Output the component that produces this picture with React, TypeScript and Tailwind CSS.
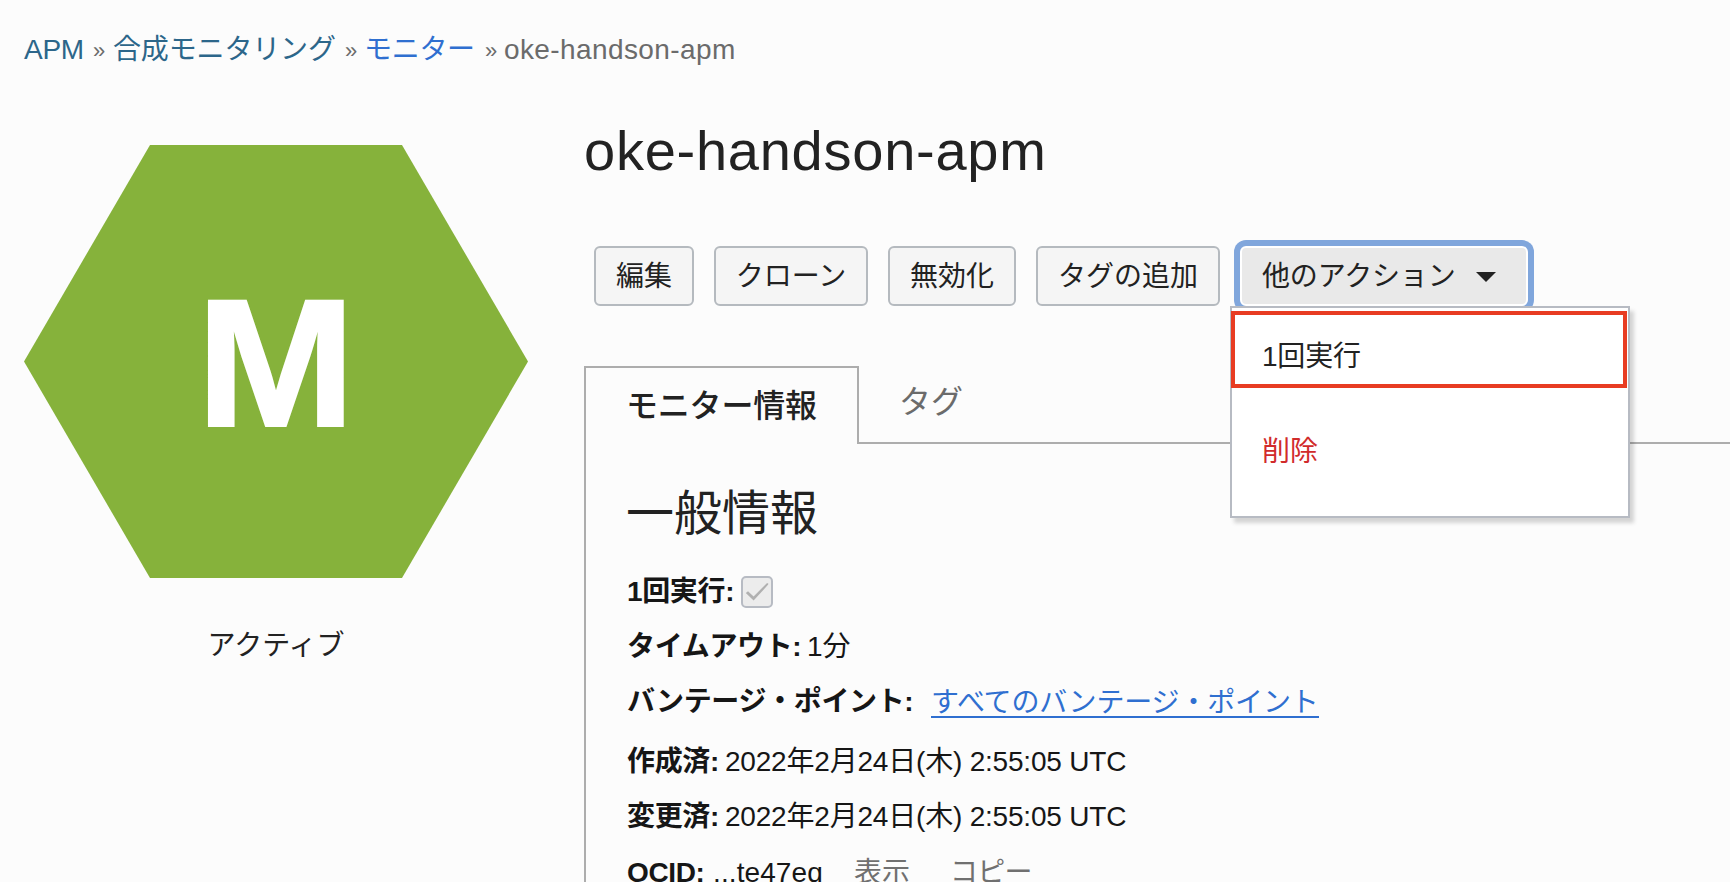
import type { ReactNode } from "react";

function ActionButton({ children, className }: { children: ReactNode; className: string }) {
  return (
    <button
      className={`flex h-[60px] items-center justify-center whitespace-nowrap rounded-[6px] border-2 border-[#b5babf] bg-[#f5f5f5] pt-px text-[28px] leading-none ${className}`}
    >
      {children}
    </button>
  );
}

function Row({ label, labelWidth, height, children }: { label: string; labelWidth: string; height: string; children: ReactNode }) {
  return (
    <div className={`flex items-center whitespace-nowrap ${height}`}>
      <span className={`shrink-0 font-bold tracking-[-0.35px] ${labelWidth}`}>{label}</span>
      {children}
    </div>
  );
}

export default function App() {
  return (
    <div
      lang="ja"
      className="flex h-[882px] w-[1730px] flex-col overflow-hidden bg-[#fcfcfc] font-['Liberation_Sans','Noto_Sans_CJK_JP',sans-serif] text-[28px] leading-none text-[#222222]"
    >
      <nav className="flex h-[98px] shrink-0 items-center whitespace-nowrap pl-6 text-[#6b6b6b]">
        <a className="w-[69px] pt-px tracking-[-0.3px] text-[#2c668a]">APM</a>
        <span className="w-[20px] pt-1 text-[22px]">»</span>
        <a className="w-[232px] pt-px tracking-[-0.15px] text-[#2c668a]">合成モニタリング</a>
        <span className="w-[19px] pt-1 text-[22px]">»</span>
        <a className="w-[121px] pt-px tracking-[-0.3px] text-[#2f6fd0]">モニター</a>
        <span className="w-[19px] pt-1 text-[22px]">»</span>
        <span className="pt-px tracking-[0.4px]">oke-handson-apm</span>
      </nav>

      <div className="flex min-h-0 flex-1">
        <aside className="flex w-[584px] shrink-0 flex-col pl-6 pt-[47px]">
          <div className="flex h-[433px] w-[504px] items-center justify-center bg-[#86b23b] [clip-path:polygon(25%_0,75%_0,100%_50%,75%_100%,25%_100%,0_50%)]">
            <span className="mt-[2px] scale-x-105 text-[182px] font-bold text-white [-webkit-text-stroke:2px_white]">M</span>
          </div>
          <div className="mt-[54px] w-[504px] text-center">アクティブ</div>
        </aside>

        <main className="flex flex-1 flex-col">
          <h1 className="flex h-[148px] shrink-0 items-start pt-[25px] text-[56px] leading-none tracking-[0.75px]">oke-handson-apm</h1>

          <div className="flex h-[60px] shrink-0 pl-[10px]">
            <ActionButton className="w-[100px]">編集</ActionButton>
            <ActionButton className="ml-5 w-[154px]">クローン</ActionButton>
            <ActionButton className="ml-5 w-[128px]">無効化</ActionButton>
            <ActionButton className="ml-5 w-[184px]">タグの追加</ActionButton>
            <div className="relative ml-5">
              <button className="flex h-[60px] w-[288px] items-center whitespace-nowrap rounded-[6px] border-2 border-white bg-[#e9e9e9] pl-5 pt-px leading-none tracking-[-0.15px] ring-[6px] ring-[#80a6dc]">
                他のアクション
                <svg className="ml-[20px] mt-px h-[10px] w-[20px]" viewBox="0 0 20 10">
                  <path d="M0 0h20L10 10z" fill="#222222" />
                </svg>
              </button>
              <div className="absolute left-[-10px] top-[60px] z-10 h-[212px] w-[400px] border-2 border-[#b7bbc3] bg-white pt-[3px] shadow-[4px_5px_4px_rgba(0,0,0,0.16)]">
                <div className="ml-[-1px] flex h-[77px] w-[396px] items-center border-4 border-[#e83c22] pl-[27px] pt-[14px] tracking-[-0.2px]">1回実行</div>
                <div className="mt-[50px] pl-[30px] text-[#d12b2b]">削除</div>
              </div>
            </div>
          </div>

          <div className="mt-[60px] flex h-[78px] shrink-0">
            <div className="w-[275px] border-2 border-b-0 border-[#adadad] pl-[40px] pt-[22px] text-[32px] font-medium tracking-[-0.2px]">モニター情報</div>
            <div className="flex-1 border-b-2 border-[#adadad] pl-[40px] pt-[20px] text-[32px] text-[#6b6b6b]">タグ</div>
          </div>

          <section className="flex flex-1 flex-col border-l-2 border-[#adadad] pl-[41px] text-[#161616]">
            <h2 className="ml-[-1px] mt-[46px] h-[74px] shrink-0 text-[48px] leading-none text-[#222222]">一般情報</h2>
            <Row label="1回実行:" labelWidth="w-[114px]" height="h-[56px]">
              <span className="flex h-8 w-8 items-center justify-center rounded-[5px] border-2 border-[#b7bbc3] bg-[#ececec]">
                <svg className="h-[20px] w-[24px]" viewBox="0 0 24 20">
                  <path d="M.8 11 3 9.2 8.6 14.6 21.8 1.2 23.2 1.2 23.2 2.6 8.6 18.6z" fill="#b0b0b0" />
                </svg>
              </span>
            </Row>
            <Row label="タイムアウト:" labelWidth="w-[180px]" height="h-[54px]">
              <span>1分</span>
            </Row>
            <Row label="バンテージ・ポイント:" labelWidth="w-[304px]" height="h-[56px]">
              <a className="h-[32px] w-[388px] border-b-2 border-[#2f6fd0] pt-[3px] tracking-[-0.15px] text-[#2f6fd0]">すべてのバンテージ・ポイント</a>
            </Row>
            <Row label="作成済:" labelWidth="w-[98px]" height="h-[64px]">
              <span className="tracking-[-0.2px]">2022年2月24日(木) 2:55:05 UTC</span>
            </Row>
            <Row label="変更済:" labelWidth="w-[98px]" height="h-[46px]">
              <span className="tracking-[-0.2px]">2022年2月24日(木) 2:55:05 UTC</span>
            </Row>
            <Row label="OCID:" labelWidth="w-[86px]" height="h-[66px]">
              <span className="w-[141px] tracking-[0.1px]">...te47eq</span>
              <a className="w-[96px] text-[#707070]">表示</a>
              <a className="tracking-[-0.8px] text-[#707070]">コピー</a>
            </Row>
          </section>
        </main>
      </div>
    </div>
  );
}
